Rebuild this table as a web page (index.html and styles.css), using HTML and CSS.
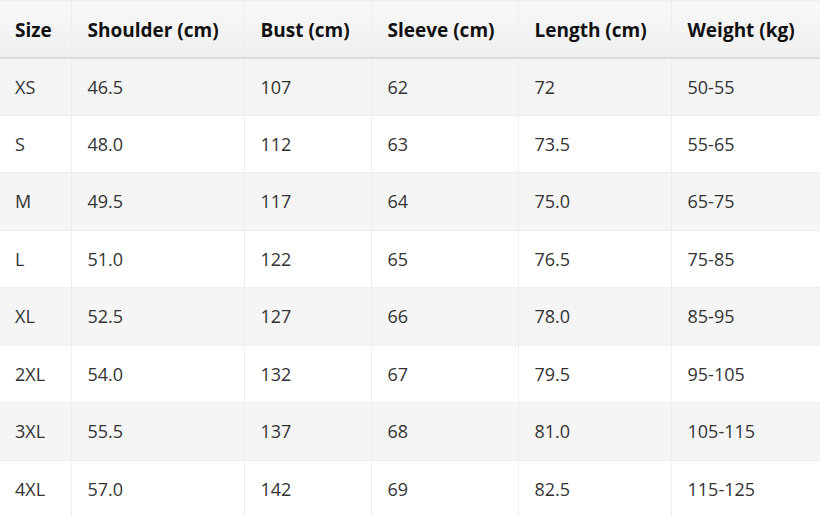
FILE: index.html
```html
<!DOCTYPE html>
<html lang="en">
<head>
<meta charset="utf-8">
<title>Size Chart</title>
<link rel="stylesheet" href="styles.css">
</head>
<body>
<table class="size-table">
  <colgroup>
    <col class="c1"><col class="c2"><col class="c3"><col class="c4"><col class="c5"><col class="c6">
  </colgroup>
  <thead>
    <tr><th>Size</th><th>Shoulder (cm)</th><th>Bust (cm)</th><th>Sleeve (cm)</th><th>Length (cm)</th><th>Weight (kg)</th></tr>
  </thead>
  <tbody>
    <tr><td>XS</td><td>46.5</td><td>107</td><td>62</td><td>72</td><td>50-55</td></tr>
    <tr><td>S</td><td>48.0</td><td>112</td><td>63</td><td>73.5</td><td>55-65</td></tr>
    <tr><td>M</td><td>49.5</td><td>117</td><td>64</td><td>75.0</td><td>65-75</td></tr>
    <tr><td>L</td><td>51.0</td><td>122</td><td>65</td><td>76.5</td><td>75-85</td></tr>
    <tr><td>XL</td><td>52.5</td><td>127</td><td>66</td><td>78.0</td><td>85-95</td></tr>
    <tr><td>2XL</td><td>54.0</td><td>132</td><td>67</td><td>79.5</td><td>95-105</td></tr>
    <tr><td>3XL</td><td>55.5</td><td>137</td><td>68</td><td>81.0</td><td>105-115</td></tr>
    <tr><td>4XL</td><td>57.0</td><td>142</td><td>69</td><td>82.5</td><td>115-125</td></tr>
  </tbody>
</table>
</body>
</html>
```
FILE: styles.css
```css
html, body {
  margin: 0;
  padding: 0;
  background: #ffffff;
}
body {
  font-family: "Open Sans", "Noto Sans", "Liberation Sans", sans-serif;
  font-size: 18px;
  color: #333333;
  overflow: hidden;
}
.size-table {
  border-collapse: collapse;
  table-layout: fixed;
  width: 820px;
}
.c1 { width: 71px; }
.c2 { width: 173px; }
.c3 { width: 127px; }
.c4 { width: 147px; }
.c5 { width: 153px; }
.c6 { width: 149px; }
.size-table tr {
  height: 57.5px;
}
.size-table th,
.size-table td {
  text-align: left;
  padding: 0 0 0 16px;
  border: 1px solid #eeeeee;
  line-height: 22px;
  white-space: nowrap;
}
.size-table th:first-child,
.size-table td:first-child {
  border-left: none;
  padding-left: 15px;
}
.size-table thead tr {
  height: 57px;
}
.size-table th {
  padding-top: 3px;
  font-size: 19px;
  font-weight: 700;
  color: #111111;
  background: linear-gradient(#f8f8f8, #efefef);
  border-bottom: 2px solid #dddddd;
}
.size-table tbody tr:nth-child(odd) td {
  background: #f5f5f5;
}
```
